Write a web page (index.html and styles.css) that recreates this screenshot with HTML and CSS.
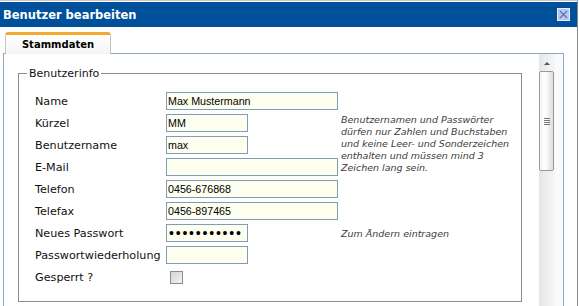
FILE: index.html
```html
<!DOCTYPE html>
<html lang="de">
<head>
    <meta charset="UTF-8">
    <meta name="viewport" content="width=device-width, initial-scale=1.0">
    <title>Benutzer bearbeiten</title>
    <link rel="stylesheet" href="styles.css">
</head>
<body>
    <div class="dialog">
        <!-- Title bar -->
        <div class="titlebar">
            <span class="title">Benutzer bearbeiten</span>
            <span class="close-button">
                <svg width="13" height="13" viewBox="0 0 13 13">
                    <rect x="0.5" y="0.5" width="12" height="12" fill="#b8c8ec" stroke="#e6ecfa"/>
                    <path d="M3 3 L10 10 M10 3 L3 10" stroke="#5a70b8" stroke-width="1.2"/>
                </svg>
            </span>
        </div>

        <!-- Tabs -->
        <div class="tabs">
            <div class="tab active">Stammdaten</div>
        </div>

        <div class="tab-panel">
            <div class="panel-content">
                <fieldset class="group">
                    <legend>Benutzerinfo</legend>
                    <div class="form-grid">
                        <label>Name</label>
                        <div><input type="text" class="wide" value="Max Mustermann"></div>
                        <div></div>

                        <label>Kürzel</label>
                        <div><input type="text" class="short" value="MM"></div>
                        <div class="hint multi">Benutzernamen und Passwörter<br>dürfen nur Zahlen und Buchstaben<br>und keine Leer- und Sonderzeichen<br>enthalten und müssen mind 3<br>Zeichen lang sein.</div>

                        <label>Benutzername</label>
                        <div><input type="text" class="short" value="max"></div>

                        <label>E-Mail</label>
                        <div><input type="text" class="wide" value=""></div>

                        <label>Telefon</label>
                        <div><input type="text" class="wide" value="0456-676868"></div>

                        <label>Telefax</label>
                        <div><input type="text" class="wide" value="0456-897465"></div>
                        <div></div>

                        <label>Neues Passwort</label>
                        <div><input type="password" class="short" value="geheim12345"></div>
                        <div class="hint">Zum Ändern eintragen</div>

                        <label>Passwortwiederholung</label>
                        <div><input type="password" class="short" value=""></div>
                        <div></div>

                        <label>Gesperrt ?</label>
                        <div><span class="checkbox"></span></div>
                        <div></div>
                    </div>
                </fieldset>
            </div>

            <!-- Scrollbar -->
            <div class="scrollbar">
                <div class="track">
                    <div class="arrow-up"></div>
                    <div class="thumb"><span class="grip"></span></div>
                </div>
                <div class="strip"></div>
            </div>
        </div>
    </div>
</body>
</html>
```

FILE: styles.css
```css
body {
    margin: 0;
    padding: 0;
    background-color: #ffffff;
    font-family: "DejaVu Sans", Verdana, sans-serif;
    overflow: hidden;
}

.dialog {
    width: 577px;
    height: 305px;
    border-top: 1px solid #c8c8c8;
    border-right: 1px solid #8a8a8a;
    background-color: #ffffff;
    overflow: hidden;
}

.titlebar {
    height: 25px;
    margin-top: 1px;
    background-color: #00509c;
    display: flex;
    align-items: center;
    justify-content: space-between;
    padding: 0 7px 0 3px;
}

.title {
    color: #ffffff;
    font-weight: bold;
    font-size: 11.5px;
    padding-top: 1px;
}

.close-button {
    display: flex;
    margin-bottom: 1px;
}

.tabs {
    display: flex;
    padding: 5px 0 0 5px;
    height: 22px;
}

.tab {
    width: 104px;
    height: 19px;
    border-top: 3px solid #f3a930;
    border-left: 1px solid #c4c4c4;
    border-right: 1px solid #c4c4c4;
    border-radius: 3px 3px 0 0;
    background: linear-gradient(#ffffff, #f5f5f5);
    text-align: center;
    font-weight: bold;
    font-size: 10px;
    line-height: 19px;
    color: #000000;
    position: relative;
    z-index: 1;
}

.tab-panel {
    display: flex;
    margin-left: 3px;
    width: 559px;
    height: 260px;
    border-top: 1px solid #8ea8bd;
    border-left: 1px solid #8ea8bd;
    border-right: 1px solid #8ea8bd;
    margin-top: -1px;
}

.panel-content {
    flex: 1;
    padding: 13px 0 0 14px;
}

.group {
    width: 502px;
    margin: 0;
    padding: 0 0 13px 0;
    border: 1px solid #8c8c8c;
    color: #000000;
}

.group legend {
    margin-left: 8px;
    padding: 0 2px;
    font-size: 11px;
    color: #111111;
}

.form-grid {
    display: grid;
    grid-template-columns: 131px 175px 180px;
    grid-auto-rows: 22px;
    margin: 10px 0 0 16px;
    font-size: 11.2px;
}

.form-grid label {
    display: flex;
    align-items: center;
    color: #111111;
}

.form-grid > div {
    display: flex;
    align-items: center;
}

.form-grid input {
    box-sizing: border-box;
    height: 18px;
    margin: 0;
    padding: 0 1px;
    border: 1px solid #7f9db9;
    background-color: #fffff0;
    font-family: "Liberation Sans", Arial, sans-serif;
    font-size: 10.7px;
    color: #000000;
    outline: none;
}

.form-grid input.wide {
    width: 172px;
}

.form-grid input.short {
    width: 82px;
}

.form-grid input[type="password"] {
    font-size: 14px;
    letter-spacing: 1.8px;
    padding: 0 0 0 2px;
}

.hint {
    font-style: italic;
    font-size: 9.5px;
    color: #3c3c3c;
    white-space: nowrap;
}

.hint.multi {
    grid-row: span 4;
    align-items: flex-start !important;
    line-height: 12px;
    padding-top: 2px;
}

.checkbox {
    display: block;
    width: 11px;
    height: 11px;
    margin-left: 4px;
    border: 1px solid #8c8c8c;
    background: linear-gradient(135deg, #d4d4d4, #f4f4f4);
}

.scrollbar {
    display: flex;
    width: 24px;
}

.track {
    width: 16px;
    background: linear-gradient(90deg, #e6e6e6, #f0f0f0 60%, #f6f6f6);
}

.strip {
    flex: 1;
    background-color: #fafafa;
}

.arrow-up {
    height: 17px;
    display: flex;
    align-items: center;
    justify-content: center;
}

.arrow-up::before {
    content: "";
    margin-top: 2px;
    border-left: 3px solid transparent;
    border-right: 3px solid transparent;
    border-bottom: 3px solid #555555;
}

.thumb {
    box-sizing: border-box;
    height: 100px;
    margin: 0 1px 0 0;
    border: 1px solid #9a9a9a;
    border-radius: 2px;
    background: linear-gradient(90deg, #f4f4f4, #ffffff 40%, #dcdcdc);
    display: flex;
    align-items: center;
    justify-content: center;
}

.grip {
    display: block;
    width: 6px;
    height: 7px;
    background: repeating-linear-gradient(#777777 0, #777777 1px, transparent 1px, transparent 2px);
}
```
